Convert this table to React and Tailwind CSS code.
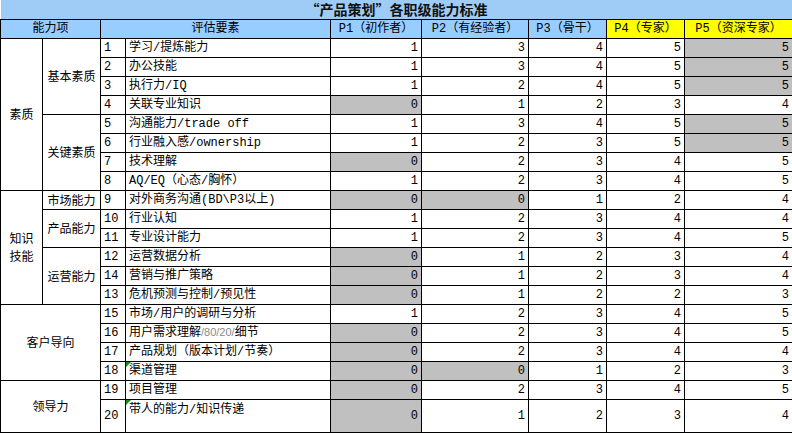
import React from "react";

const rows = [
  { n: "1", t: "学习/提炼能力", v: [1, 3, 4, 5, 5], g: [4] },
  { n: "2", t: "办公技能", v: [1, 3, 4, 5, 5], g: [4] },
  { n: "3", t: "执行力/IQ", v: [1, 2, 4, 5, 5], g: [4] },
  { n: "4", t: "关联专业知识", v: [0, 1, 2, 3, 4], g: [0] },
  { n: "5", t: "沟通能力/trade off", v: [1, 3, 4, 5, 5], g: [4] },
  { n: "6", t: "行业融入感/ownership", v: [1, 2, 3, 5, 5], g: [4] },
  { n: "7", t: "技术理解", v: [0, 2, 3, 4, 5], g: [0] },
  { n: "8", t: "AQ/EQ（心态/胸怀）", v: [1, 2, 3, 4, 5], g: [] },
  { n: "9", t: "对外商务沟通(BD\\P3以上)", v: [0, 0, 1, 2, 4], g: [0, 1] },
  { n: "10", t: "行业认知", v: [1, 2, 3, 4, 4], g: [] },
  { n: "11", t: "专业设计能力", v: [1, 2, 3, 4, 5], g: [] },
  { n: "12", t: "运营数据分析", v: [0, 1, 2, 3, 4], g: [0] },
  { n: "14", t: "营销与推广策略", v: [0, 1, 2, 3, 4], g: [0] },
  { n: "13", t: "危机预测与控制/预见性", v: [0, 1, 2, 2, 3], g: [0] },
  { n: "15", t: "市场/用户的调研与分析", v: [1, 2, 3, 4, 5], g: [] },
  { n: "16", t: "用户需求理解", v: [0, 2, 3, 4, 5], g: [0], odd: true },
  { n: "17", t: "产品规划（版本计划/节奏）", v: [0, 2, 3, 4, 4], g: [0] },
  { n: "18", t: "渠道管理", v: [0, 0, 1, 2, 3], g: [0, 1], mark: true },
  { n: "19", t: "项目管理", v: [0, 2, 3, 4, 5], g: [0] },
  { n: "20", t: "带人的能力/知识传递", v: [0, 1, 2, 3, 4], g: [0], mark: true, tall: true },
];

// group cells: index of the row where they start
const outer = {
  0: { label: "素质", span: 8 },
  8: { label: "知识\n技能", span: 6 },
  14: { label: "客户导向", span: 4, wide: true },
  18: { label: "领导力", span: 2, wide: true },
};
const inner = {
  0: { label: "基本素质", span: 4 },
  4: { label: "关键素质", span: 4 },
  8: { label: "市场能力", span: 1 },
  9: { label: "产品能力", span: 2 },
  11: { label: "运营能力", span: 3 },
};

const cell = "border border-black p-0";

function Mark() {
  return (
    <svg className="absolute left-0 top-0" width="5" height="5" viewBox="0 0 5 5">
      <polygon points="0,0 5,0 0,5" fill="#1a8a1a" />
    </svg>
  );
}

export default function App() {
  return (
    <div className="w-[792px] h-[433px] overflow-hidden bg-white text-black text-[12px] leading-none font-['Liberation_Mono','Noto_Sans_CJK_SC',monospace]">
      <table className="w-[792px] table-fixed border-collapse">
        <colgroup>
          <col className="w-[42px]" />
          <col className="w-[58px]" />
          <col className="w-[25px]" />
          <col className="w-[205px]" />
          <col className="w-[91px]" />
          <col className="w-[107px]" />
          <col className="w-[78px]" />
          <col className="w-[78px]" />
          <col className="w-[108px]" />
        </colgroup>
        <tbody>
          <tr className="h-[19px]">
            <td
              colSpan={9}
              className="bg-[#9fcbf7] border-b border-black p-0 text-center text-[14px] font-bold font-['Noto_Sans_CJK_SC',sans-serif] text-[#111]"
            >
              “产品策划”各职级能力标准
            </td>
          </tr>
          <tr className="h-[19px] bg-[#99ccff]">
            <td colSpan={2} className={`${cell} text-center`}>能力项</td>
            <td colSpan={2} className={`${cell} text-center`}>评估要素</td>
            <td className={`${cell} text-center`}>P1（初作者）</td>
            <td className={`${cell} text-center`}>P2（有经验者）</td>
            <td className={`${cell} text-center`}>P3（骨干）</td>
            <td className={`${cell} text-center bg-[#ffff00]`}>P4（专家）</td>
            <td className={`${cell} text-center bg-[#ffff00]`}>P5（资深专家）</td>
          </tr>
          {rows.map((r, i) => {
            const o = outer[i];
            const m = inner[i];
            return (
              <tr key={r.n} className={r.tall ? "h-[33px]" : "h-[19px]"}>
                {o && (
                  <td
                    rowSpan={o.span}
                    colSpan={o.wide ? 2 : 1}
                    className={`${cell} text-center whitespace-pre-line leading-[18px] font-['Noto_Sans_CJK_SC',sans-serif]`}
                  >
                    {o.label}
                  </td>
                )}
                {m && (
                  <td rowSpan={m.span} className={`${cell} text-center font-['Noto_Sans_CJK_SC',sans-serif]`}>
                    {m.label}
                  </td>
                )}
                <td className={`${cell} pl-[3px]`}>{r.n}</td>
                <td className={`${cell} relative pl-[3px] whitespace-nowrap ${r.tall ? "align-top pt-[4px]" : ""}`}>
                  {r.mark && <Mark />}
                  {r.odd ? (
                    <>
                      用户需求理解
                      <span className="font-['Liberation_Sans',sans-serif] text-[11px] text-[#8a8a8a]">/80/20/</span>
                      细节
                    </>
                  ) : (
                    r.t
                  )}
                </td>
                {r.v.map((v, j) => (
                  <td
                    key={j}
                    className={`${cell} text-right pr-[3px] ${r.g.includes(j) ? "bg-[#c0c0c0]" : ""}`}
                  >
                    {v}
                  </td>
                ))}
              </tr>
            );
          })}
        </tbody>
      </table>
    </div>
  );
}
